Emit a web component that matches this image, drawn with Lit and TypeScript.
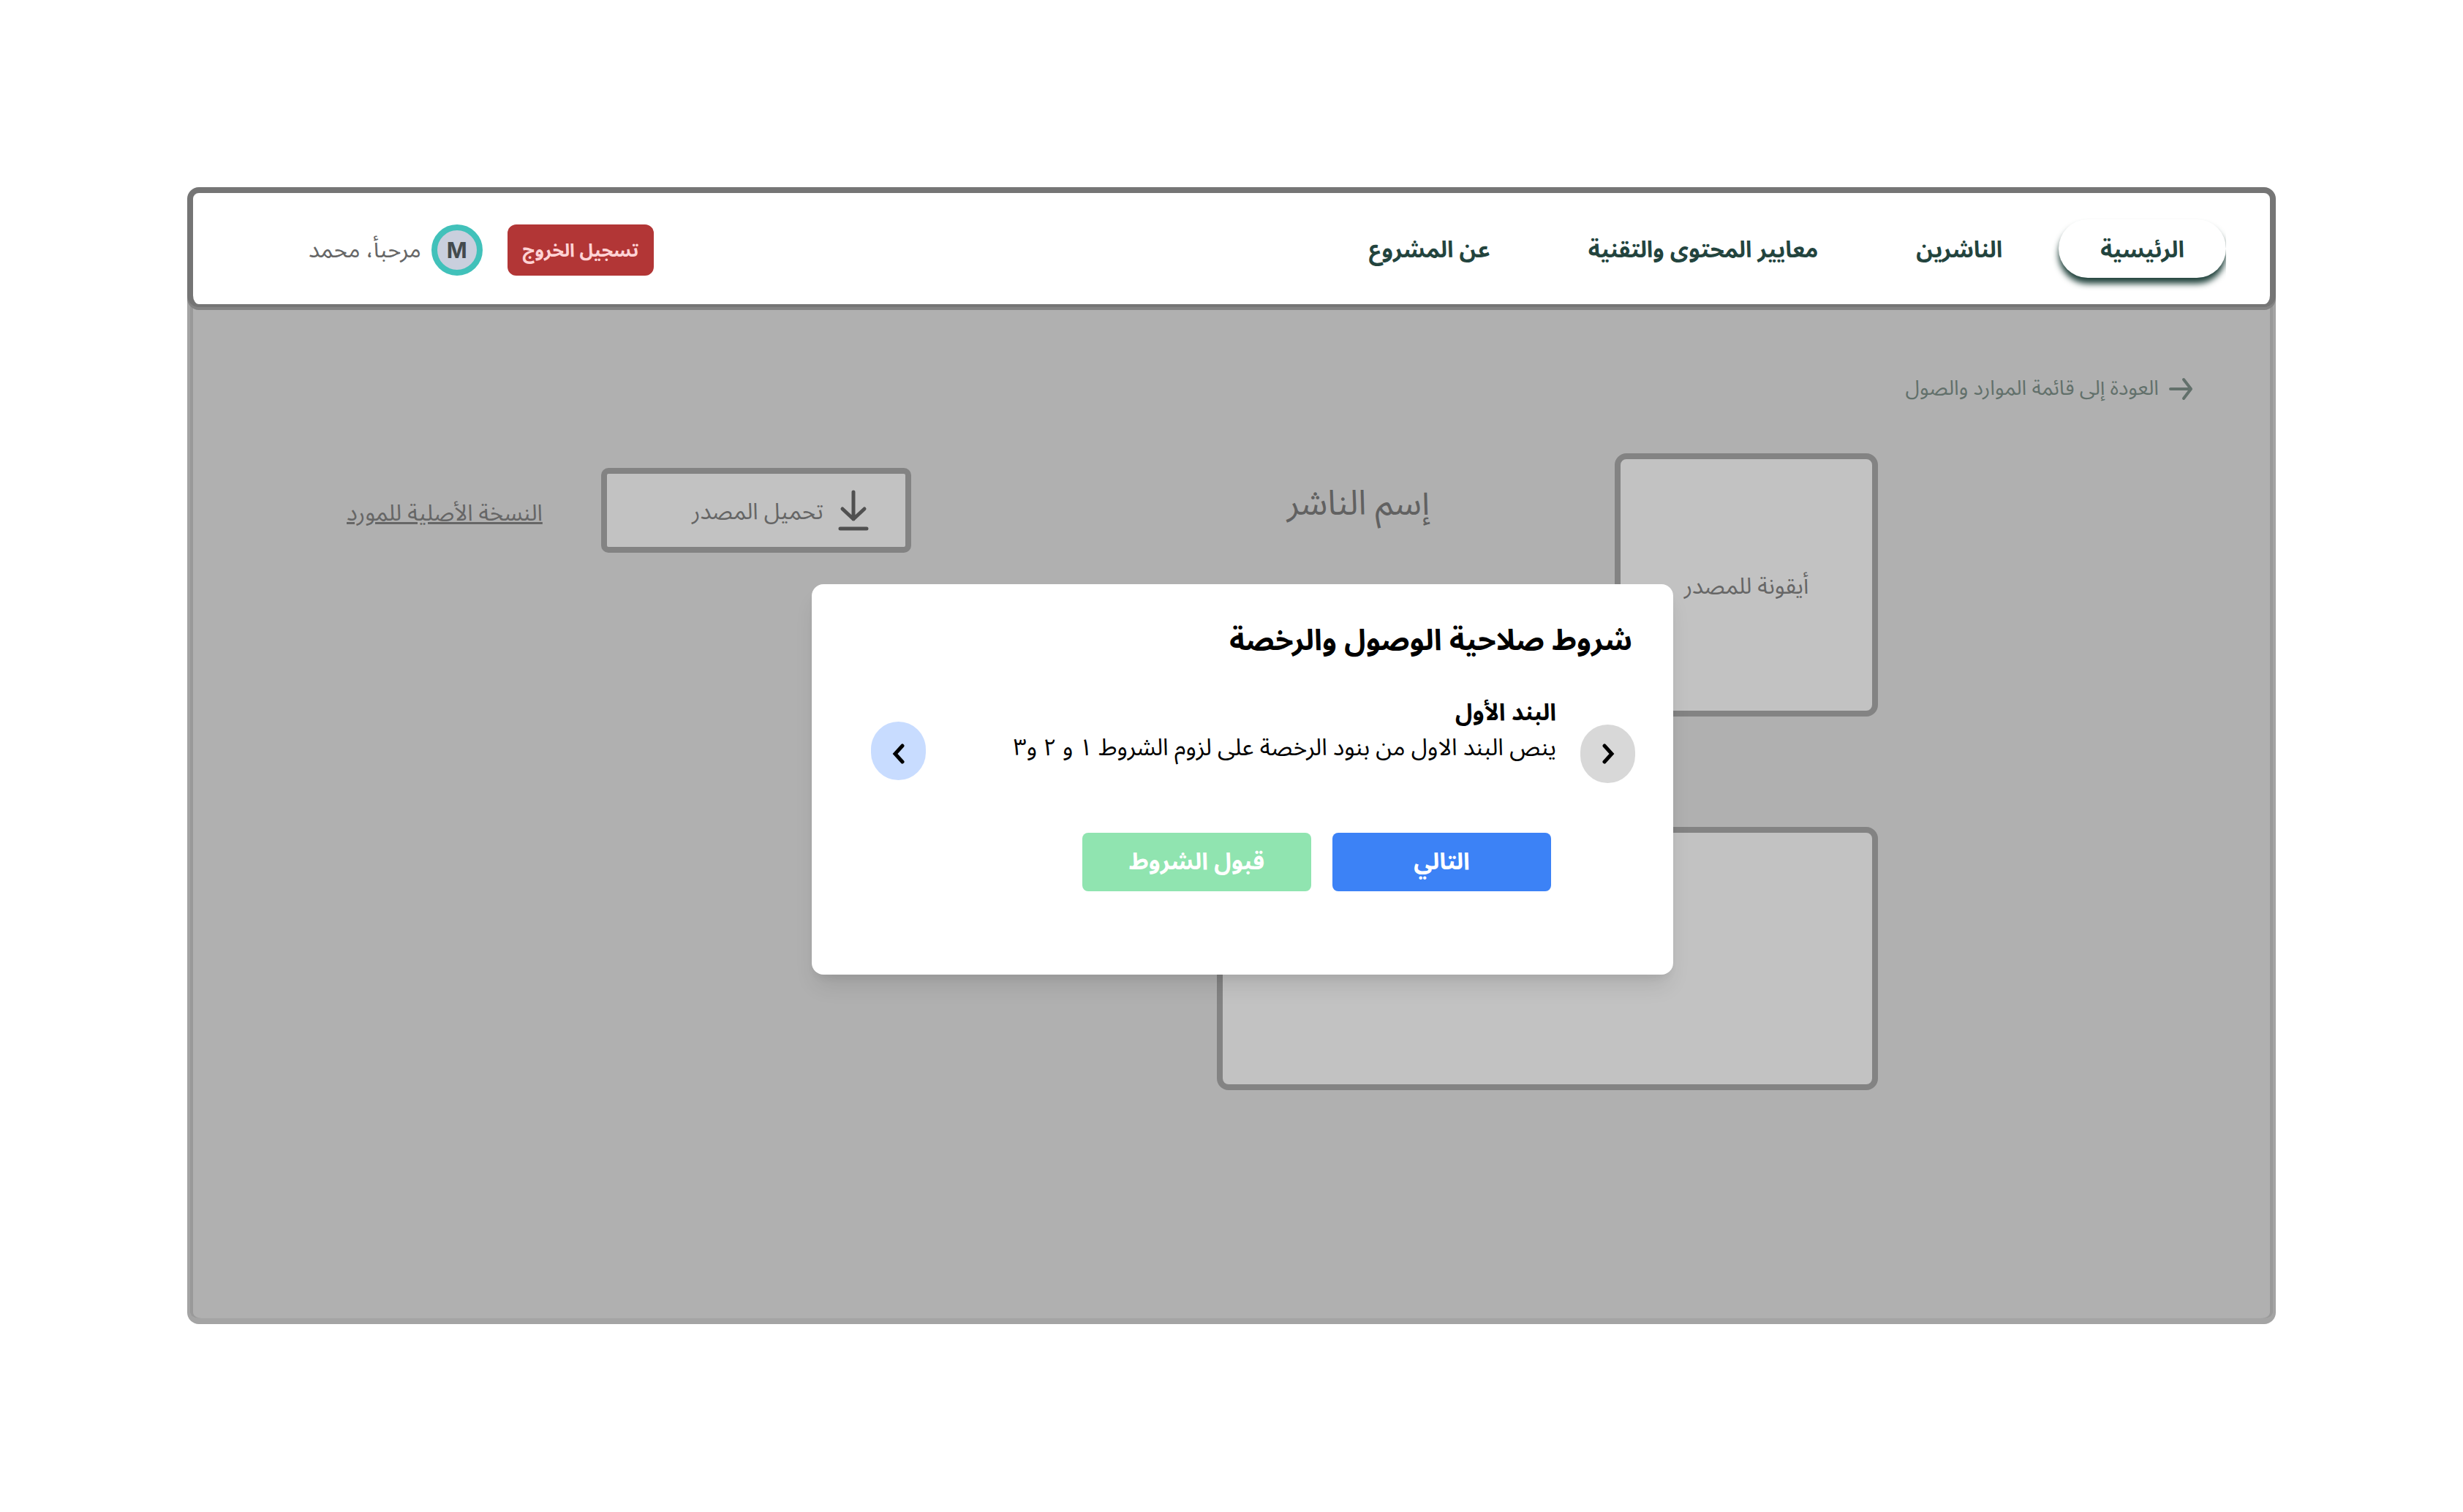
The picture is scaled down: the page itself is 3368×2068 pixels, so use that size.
import { LitElement, html, css } from "lit";
import { customElement, state } from "lit/decorators.js";

interface NavItem {
  label: string;
  href: string;
}

const NAV: NavItem[] = [
  { label: "الرئيسية", href: "#home" },
  { label: "الناشرين", href: "#publishers" },
  { label: "معايير المحتوى والتقنية", href: "#standards" },
  { label: "عن المشروع", href: "#about" },
];

@customElement("site-header")
export class SiteHeader extends LitElement {
  static styles = css`
    :host {
      display: block;
      position: relative;
      z-index: 1;
    }
    .bar {
      display: flex;
      align-items: center;
      justify-content: space-between;
      min-height: 152px;
      padding: 0 60px 0 158px;
      border: 8px solid #757575;
      border-bottom-width: 4px;
      border-radius: 16px;
      background: #fff;
      box-shadow: 0 4px 0 #838383;
    }
    .nav {
      display: flex;
      gap: 20px;
    }
    .link {
      padding: 4px 57px 0;
      border-radius: 40px;
      color: #23443e;
      font-size: 31px;
      font-weight: 700;
      line-height: 76px;
      text-decoration: none;
      white-space: nowrap;
    }
    .link.active {
      background: #fff;
      box-shadow: 0 8px 8px #23443e;
      clip-path: inset(-20px 0 -20px -20px);
    }
    .account {
      display: flex;
      align-items: center;
      padding-top: 4px;
    }
    .logout {
      height: 70px;
      width: 200px;
      margin-inline-end: 34px;
      padding: 2px 0 0;
      border: 0;
      border-radius: 12px;
      background: #b23636;
      color: #ffd3d5;
      font: inherit;
      font-size: 25px;
      font-weight: 700;
      white-space: nowrap;
    }
    .avatar {
      display: grid;
      place-items: center;
      box-sizing: border-box;
      width: 70px;
      height: 70px;
      margin-inline-end: 14px;
      border: 8px solid #41c1ba;
      border-radius: 50%;
      background: #c9cfdd;
      color: #444a4d;
      font-family: Inter, sans-serif;
      font-size: 30px;
      font-weight: 700;
    }
    .greeting {
      color: #666;
      font-size: 31px;
      line-height: 48px;
      white-space: nowrap;
    }
  `;

  render() {
    return html`
      <header class="bar">
        <nav class="nav">
          ${NAV.map(
            (item, i) =>
              html`<a class=${i === 0 ? "link active" : "link"} href=${item.href}>${item.label}</a>`,
          )}
        </nav>
        <div class="account">
          <button class="logout" type="button">تسجيل الخروج</button>
          <span class="avatar">M</span>
          <span class="greeting">مرحبأ، محمد</span>
        </div>
      </header>
    `;
  }
}

@customElement("resource-details")
export class ResourceDetails extends LitElement {
  static styles = css`
    :host {
      display: block;
    }
    .content {
      margin-top: -16px;
      padding: 108px 110px 312px 214px;
      border: solid #a4a4a4;
      border-width: 0 4px 8px;
      border-radius: 0 0 16px 16px;
      background: #b0b0b0;
      box-shadow: inset 4px 0 0 #999, inset -4px 0 0 #999;
      color: #666;
    }
    .back {
      display: flex;
      align-items: center;
      gap: 14px;
      width: max-content;
      height: 40px;
      color: #62706b;
      font-size: 28px;
      line-height: 40px;
      text-decoration: none;
    }
    .arrow {
      width: 32px;
      height: 24px;
    }
    .resource {
      display: flex;
      align-items: flex-start;
      margin-top: 68px;
      padding-right: 430px;
    }
    .box {
      box-sizing: border-box;
      border: 8px solid #838383;
      border-radius: 16px;
      background: #c2c2c2;
    }
    .thumb {
      display: grid;
      place-items: center;
      flex: none;
      width: 360px;
      height: 360px;
      padding-top: 4px;
      font-size: 31px;
    }
    .info {
      display: flex;
      flex: 1;
      align-items: center;
      gap: 80px;
      margin-top: 20px;
      padding-inline-start: 253px;
    }
    .publisher {
      flex: 1;
      margin: 0 0 18px;
      color: #616161;
      font-size: 47px;
      font-weight: 400;
      line-height: 72px;
      white-space: nowrap;
    }
    .download {
      display: flex;
      align-items: center;
      gap: 20px;
      flex: none;
      width: 424px;
      height: 116px;
      padding: 0 50px;
      border-radius: 10px;
      color: inherit;
      font: inherit;
      font-size: 31px;
    }
    .caption {
      padding-top: 4px;
    }
    .tray {
      width: 42px;
      height: 56px;
    }
    .origin {
      padding-top: 8px;
      color: inherit;
      font-size: 31px;
      line-height: 48px;
      text-decoration: underline;
      white-space: nowrap;
    }
    .description {
      width: 904px;
      height: 360px;
      margin: 151px 430px 0 0;
    }
  `;

  render() {
    return html`
      <main class="content">
        <a class="back" href="#resources">
          <svg class="arrow" viewBox="0 0 32 24" fill="none" stroke="currentColor" stroke-width="4" stroke-linecap="round" stroke-linejoin="round" overflow="visible" aria-hidden="true">
            <path d="M2 12H30M20 -1L30 12L20 25" />
          </svg>
          العودة إلى قائمة الموارد والصول
        </a>
        <section class="resource">
          <div class="box thumb">أيقونة للمصدر</div>
          <div class="info">
            <h1 class="publisher">إسم الناشر</h1>
            <button class="box download" type="button">
              <svg class="tray" viewBox="0 0 42 56" fill="none" stroke="#505050" stroke-width="5" stroke-linecap="round" stroke-linejoin="round" aria-hidden="true">
                <path d="M21 3V40M6 26L21 40L36 26M3 53H39" />
              </svg>
              <span class="caption">تحميل المصدر</span>
            </button>
            <a class="origin" href="#original">النسخة الأصلية للمورد</a>
          </div>
        </section>
        <section class="box description"></section>
      </main>
    `;
  }
}

const TERMS = [
  {
    title: "البند الأول",
    text: "ينص البند الاول من بنود الرخصة على لزوم الشروط ١ و ٢ و٣",
  },
];

@customElement("license-dialog")
export class LicenseDialog extends LitElement {
  @state() private index = 0;

  static styles = css`
    :host {
      position: absolute;
      inset: 0;
      z-index: 2;
      display: flex;
      align-items: flex-start;
      justify-content: center;
      padding: 543px 0 0 30px;
    }
    .dialog {
      box-sizing: border-box;
      width: 1178px;
      padding: 48px 52px 114px 81px;
      border-radius: 16px;
      background: #fff;
      box-shadow: 0 20px 30px -6px rgb(0 0 0 / 10%), 0 8px 12px -4px rgb(0 0 0 / 6%);
      color: #000;
      font-size: 32px;
      line-height: 48px;
    }
    .title {
      margin: 0 4px 44px;
      font-size: 40px;
      font-weight: 700;
      line-height: 60px;
    }
    .term {
      display: flex;
      align-items: flex-end;
      min-height: 120px;
    }
    .text {
      flex: 1;
      align-self: flex-start;
      padding-inline-start: 33px;
    }
    .name {
      margin: 0;
      font-size: 32px;
      font-weight: 700;
    }
    .body {
      margin: 0;
      white-space: nowrap;
    }
    .step {
      display: grid;
      place-items: center;
      width: 75px;
      height: 80px;
      padding: 0;
      border: 0;
      border-radius: 38px;
    }
    .step.prev {
      background: #d8d8d8;
    }
    .step.next {
      margin-bottom: 4px;
      padding-top: 8px;
      background: #c8dcff;
    }
    .chevron {
      width: 18px;
      height: 28px;
    }
    .actions {
      display: flex;
      gap: 29px;
      margin-top: 68px;
      padding-inline-start: 115px;
    }
    .action {
      height: 80px;
      padding: 0;
      border: 0;
      border-radius: 8px;
      color: #fff;
      font: inherit;
      font-weight: 700;
    }
    .action.forward {
      width: 299px;
      background: #3c82f6;
    }
    .action.accept {
      width: 313px;
      background: #90e4b0;
    }
  `;

  private move(step: number) {
    this.index = Math.min(TERMS.length - 1, Math.max(0, this.index + step));
  }

  render() {
    const term = TERMS[this.index];
    return html`
      <section class="dialog" role="dialog" aria-labelledby="title">
        <h2 class="title" id="title">شروط صلاحية الوصول والرخصة</h2>
        <div class="term">
          <button class="step prev" type="button" aria-label="السابق" @click=${() => this.move(-1)}>
            <svg class="chevron" viewBox="0 0 18 28" fill="none" stroke="#000" stroke-width="5" stroke-linecap="round" stroke-linejoin="miter" aria-hidden="true">
              <path d="M4 3L14 14L4 25" />
            </svg>
          </button>
          <div class="text">
            <h3 class="name">${term.title}</h3>
            <p class="body">${term.text}</p>
          </div>
          <button class="step next" type="button" aria-label="البند التالي" @click=${() => this.move(1)}>
            <svg class="chevron" viewBox="0 0 18 28" fill="none" stroke="#000" stroke-width="5" stroke-linecap="round" stroke-linejoin="miter" aria-hidden="true">
              <path d="M14 3L4 14L14 25" />
            </svg>
          </button>
        </div>
        <div class="actions">
          <button class="action forward" type="button" @click=${() => this.move(1)}>التالي</button>
          <button class="action accept" type="button">قبول الشروط</button>
        </div>
      </section>
    `;
  }
}

@customElement("app-root")
export class AppRoot extends LitElement {
  static styles = css`
    :host {
      display: block;
      box-sizing: border-box;
      min-height: 100vh;
      padding: 256px;
      background: #fff;
      direction: rtl;
      font-family: "Noto Sans Arabic", "Noto Sans", sans-serif;
    }
    .frame {
      position: relative;
    }
  `;

  render() {
    return html`
      <div class="frame">
        <site-header></site-header>
        <resource-details></resource-details>
        <license-dialog></license-dialog>
      </div>
    `;
  }
}
